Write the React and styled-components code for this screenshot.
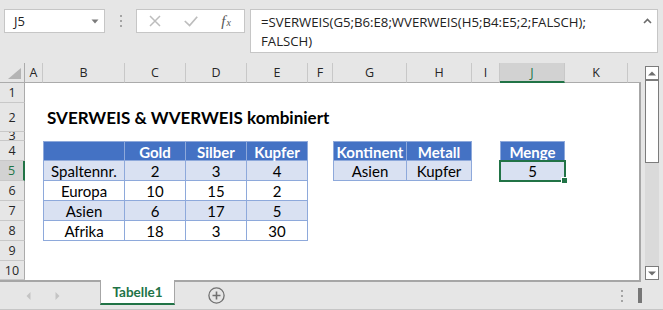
import styled, { createGlobalStyle, css } from "styled-components";

const GlobalStyle = createGlobalStyle`
  html, body {
    margin: 0;
    padding: 0;
    background: #e6e6e6;
  }
  body {
    width: 663px;
    height: 310px;
    overflow: hidden;
  }
`;

const GREEN = "#217346";

const COLS = [
  { k: "", w: 25 },
  { k: "A", w: 18 },
  { k: "B", w: 82 },
  { k: "C", w: 61 },
  { k: "D", w: 61 },
  { k: "E", w: 61 },
  { k: "F", w: 25 },
  { k: "G", w: 74 },
  { k: "H", w: 65 },
  { k: "I", w: 28 },
  { k: "J", w: 65 },
  { k: "K", w: 63 },
  { k: "_", w: 13 },
];

const ROW_H = [20, 29, 9, 20, 20, 20, 20, 20, 20, 19];

// table content keyed by address
const CELLS = {
  B2: { v: "SVERWEIS & WVERWEIS kombiniert", t: "title" },
  B4: { v: "", t: "head" },
  C4: { v: "Gold", t: "head" },
  D4: { v: "Silber", t: "head" },
  E4: { v: "Kupfer", t: "head" },
  B5: { v: "Spaltennr.", t: "band" },
  C5: { v: "2", t: "band" },
  D5: { v: "3", t: "band" },
  E5: { v: "4", t: "band" },
  B6: { v: "Europa", t: "plain" },
  C6: { v: "10", t: "plain" },
  D6: { v: "15", t: "plain" },
  E6: { v: "2", t: "plain" },
  B7: { v: "Asien", t: "band" },
  C7: { v: "6", t: "band" },
  D7: { v: "17", t: "band" },
  E7: { v: "5", t: "band" },
  B8: { v: "Afrika", t: "plain" },
  C8: { v: "18", t: "plain" },
  D8: { v: "3", t: "plain" },
  E8: { v: "30", t: "plain" },
  G4: { v: "Kontinent", t: "head" },
  H4: { v: "Metall", t: "head" },
  G5: { v: "Asien", t: "band" },
  H5: { v: "Kupfer", t: "band" },
  J4: { v: "Menge", t: "head" },
  J5: { v: "5", t: "band" },
};

const TABLE_LEFT = ["B", "G", "J"];
const ACTIVE = { col: "J", row: 5 };

const App = () => {
  return (
    <>
      <GlobalStyle />
      <Window>
        <TopBar>
          <NameBox>
            <span>J5</span>
            <svg width="8" height="5" viewBox="0 0 8 5">
              <path d="M0.5 0.5h7L4 4.5z" fill="#7b7b7b" />
            </svg>
          </NameBox>
          <Grip>
            <i />
            <i />
            <i />
          </Grip>
          <FxButtons>
            <FxBtn>
              <svg width="12" height="12" viewBox="0 0 12 12">
                <path d="M1 1L11 11M11 1L1 11" stroke="#bdbdbd" strokeWidth="1.5" />
              </svg>
            </FxBtn>
            <FxBtn>
              <svg width="14" height="11" viewBox="0 0 14 11">
                <path d="M0.8 5L5.6 9.6L13.2 0.8" stroke="#bdbdbd" strokeWidth="1.7" fill="none" />
              </svg>
            </FxBtn>
            <FxBtn>
              <FxLabel>
                f<small>x</small>
              </FxLabel>
            </FxBtn>
          </FxButtons>
          <FormulaBar>
            <FormulaText>
              =SVERWEIS(G5;B6:E8;WVERWEIS(H5;B4:E5;2;FALSCH);
              <br />
              FALSCH)
            </FormulaText>
            <Collapse>
              <svg width="9" height="6" viewBox="0 0 9 6">
                <path d="M1 5L4.5 1.5L8 5" stroke="#6b6b6b" strokeWidth="1.6" fill="none" />
              </svg>
            </Collapse>
          </FormulaBar>
        </TopBar>

        <Middle>
          <Sheet>
            <Corner>
              <svg width="13" height="11" viewBox="0 0 13 11">
                <path d="M13 0V11H0z" fill="#b4b4b4" />
              </svg>
            </Corner>
            {COLS.slice(1).map((c) => (
              <ColHead key={c.k} $active={c.k === ACTIVE.col} $last={c.k === "_"}>
                {c.k === "_" ? "" : c.k}
              </ColHead>
            ))}
            {ROW_H.map((h, i) => {
              const row = i + 1;
              return [
                <RowHead key={"r" + row} $active={row === ACTIVE.row} $tiny={h < 12}>
                  {row}
                </RowHead>,
                ...COLS.slice(1).map((c) => {
                  const addr = c.k + row;
                  const cell = CELLS[addr];
                  if (c.k === "_") return <EdgeCell key={addr} />;
                  if (!cell) return <Cell key={addr} />;
                  if (cell.t === "title") return <Title key={addr}>{cell.v}</Title>;
                  return (
                    <TableCell
                      key={addr}
                      $kind={cell.t}
                      $l={TABLE_LEFT.includes(c.k)}
                      $t={row === 4}
                      $sel={c.k === ACTIVE.col && row === ACTIVE.row}
                    >
                      {cell.v}
                    </TableCell>
                  );
                }),
              ];
            })}
          </Sheet>
          <VScroll>
            <ScrollBtn>
              <svg width="8" height="5" viewBox="0 0 8 5">
                <path d="M0 4.5h8L4 0.5z" fill="#6e6e6e" />
              </svg>
            </ScrollBtn>
            <Thumb />
            <Track />
            <ScrollBtn>
              <svg width="8" height="5" viewBox="0 0 8 5">
                <path d="M0 0.5h8L4 4.5z" fill="#6e6e6e" />
              </svg>
            </ScrollBtn>
          </VScroll>
        </Middle>

        <TabBar>
          <NavGroup>
            <NavArrow>
              <svg width="5" height="8" viewBox="0 0 5 8">
                <path d="M4.5 0v8L0.5 4z" fill="#c4c4c4" />
              </svg>
            </NavArrow>
            <NavArrow>
              <svg width="5" height="8" viewBox="0 0 5 8">
                <path d="M0.5 0v8L4.5 4z" fill="#c4c4c4" />
              </svg>
            </NavArrow>
          </NavGroup>
          <SheetTab>Tabelle1</SheetTab>
          <AddSheet>
            <svg width="17" height="17" viewBox="0 0 17 17">
              <circle cx="8.5" cy="8.5" r="7.6" stroke="#707070" strokeWidth="1.3" fill="none" />
              <path d="M8.5 4.5v8M4.5 8.5h8" stroke="#707070" strokeWidth="1.6" />
            </svg>
          </AddSheet>
          <RightTools>
            <Grip $small>
              <i />
              <i />
              <i />
            </Grip>
            <SplitBar />
          </RightTools>
        </TabBar>
      </Window>
    </>
  );
};

const Window = styled.div`
  width: 663px;
  height: 310px;
  background: #e6e6e6;
  display: flex;
  flex-direction: column;
  overflow: hidden;
`;

/* ---------- formula bar ---------- */

const TopBar = styled.div`
  height: 63px;
  flex: none;
  display: flex;
  align-items: flex-start;
  padding: 9px 0 0 4px;
  box-sizing: border-box;
`;

const NameBox = styled.div`
  width: 101px;
  height: 24px;
  box-sizing: border-box;
  background: #fff;
  border: 1px solid #c6c6c6;
  display: flex;
  align-items: center;
  justify-content: space-between;
  padding: 0 5px 0 9px;
  font-family: "Open Sans", "Noto Sans", sans-serif;
  font-size: 13px;
  color: #222;
`;

const Grip = styled.div`
  width: ${(p) => (p.$small ? "4px" : "31px")};
  height: ${(p) => (p.$small ? "auto" : "24px")};
  display: flex;
  flex-direction: column;
  align-items: center;
  justify-content: center;
  gap: 3px;

  i {
    display: block;
    width: 2px;
    height: 2px;
    background: #a4a4a4;
  }
`;

const FxButtons = styled.div`
  width: 109px;
  height: 24px;
  box-sizing: border-box;
  background: #fff;
  border: 1px solid #c6c6c6;
  display: flex;
`;

const FxBtn = styled.div`
  flex: 1;
  display: flex;
  align-items: center;
  justify-content: center;
`;

const FxLabel = styled.span`
  font-family: "Liberation Serif", serif;
  font-style: italic;
  font-size: 15px;
  color: #555;
  line-height: 1;

  small {
    font-size: 10px;
    margin-left: 1px;
  }
`;

const FormulaBar = styled.div`
  margin-left: 5px;
  width: 408px;
  height: 44px;
  box-sizing: border-box;
  background: #fff;
  border: 1px solid #c6c6c6;
  display: flex;
  justify-content: space-between;
  padding: 3px 0 0 10px;
`;

const FormulaText = styled.div`
  font-family: "Open Sans", "Noto Sans", sans-serif;
  font-size: 13.2px;
  line-height: 19px;
  color: #222;
  white-space: nowrap;
`;

const Collapse = styled.div`
  width: 20px;
  height: 16px;
  display: flex;
  align-items: center;
  justify-content: center;
`;

/* ---------- sheet ---------- */

const Middle = styled.div`
  display: flex;
  flex: none;
`;

const Sheet = styled.div`
  display: grid;
  grid-template-columns: ${COLS.map((c) => c.w + "px").join(" ")};
  grid-template-rows: 20px ${ROW_H.map((h) => h + "px").join(" ")};
  border-bottom: 2px solid #a6a6a6;
  font-family: Lato, "Liberation Sans", sans-serif;
`;

const headerText = css`
  font-family: "Open Sans", "Noto Sans", sans-serif;
  font-size: 12.5px;
  color: #262626;
  background: #e6e6e6;
  box-sizing: border-box;
  display: flex;
  align-items: center;
  justify-content: center;
  overflow: hidden;
`;

const Corner = styled.div`
  ${headerText};
  border-right: 1px solid #ababab;
  border-bottom: 1px solid #ababab;
  align-items: flex-end;
  justify-content: flex-end;
  padding: 0 3px 3px 0;
`;

const ColHead = styled.div`
  ${headerText};
  border-right: ${(p) => (p.$last ? "none" : "1px solid #c8c8c8")};
  border-bottom: 1px solid #ababab;

  ${(p) =>
    p.$active &&
    css`
      background: #d2d2d2;
      color: ${GREEN};
      border-bottom: 2px solid ${GREEN};
    `}
`;

const RowHead = styled.div`
  ${headerText};
  border-right: 1px solid #ababab;
  border-bottom: 1px solid #c8c8c8;
  line-height: ${(p) => (p.$tiny ? "8px" : "normal")};

  ${(p) =>
    p.$active &&
    css`
      background: #d2d2d2;
      color: ${GREEN};
      border-right: 2px solid ${GREEN};
    `}
`;

const Cell = styled.div`
  background: #fff;
`;

const EdgeCell = styled(Cell)`
  border-right: 2px solid #a6a6a6;
`;

const Title = styled(Cell)`
  display: flex;
  align-items: flex-end;
  padding: 0 0 4px 4px;
  white-space: nowrap;
  overflow: visible;
  font-weight: 700;
  font-size: 17px;
  color: #000;
  position: relative;
  z-index: 1;
`;

const TABLE_BG = {
  head: "#4472c4",
  band: "#d9e1f2",
  plain: "#ffffff",
};

const TableCell = styled.div`
  box-sizing: border-box;
  background: ${(p) => TABLE_BG[p.$kind]};
  color: ${(p) => (p.$kind === "head" ? "#fff" : "#000")};
  font-weight: ${(p) => (p.$kind === "head" ? 700 : 400)};
  font-size: 15px;
  display: flex;
  align-items: center;
  justify-content: center;
  padding-top: 1px;
  white-space: nowrap;
  border-right: 1px solid #8ea9db;
  border-bottom: 1px solid #8ea9db;
  border-left: ${(p) => (p.$l ? "1px solid #8ea9db" : "none")};
  border-top: ${(p) => (p.$t ? "1px solid #8ea9db" : "none")};
  position: relative;

  ${(p) =>
    p.$sel &&
    css`
      &::after {
        content: "";
        position: absolute;
        left: -2px;
        top: -1px;
        right: -2px;
        bottom: -2px;
        border: 2px solid ${GREEN};
        pointer-events: none;
      }
      &::before {
        content: "";
        position: absolute;
        right: -4px;
        bottom: -4px;
        width: 5px;
        height: 5px;
        background: ${GREEN};
        border: 1px solid #fff;
        z-index: 2;
      }
    `}
`;

/* ---------- vertical scrollbar ---------- */

const VScroll = styled.div`
  width: 14px;
  margin: 3px 4px 2px 4px;
  display: flex;
  flex-direction: column;
  background: #dadada;
`;

const ScrollBtn = styled.div`
  height: 14px;
  flex: none;
  box-sizing: border-box;
  background: #fff;
  border: 1px solid #7c7c7c;
  display: flex;
  align-items: center;
  justify-content: center;
`;

const Thumb = styled.div`
  height: 83px;
  flex: none;
  box-sizing: border-box;
  background: #fff;
  border: 1px solid #7c7c7c;
`;

const Track = styled.div`
  flex: 1;
`;

/* ---------- sheet tabs ---------- */

const TabBar = styled.div`
  height: 27px;
  flex: none;
  display: flex;
  align-items: center;
  border-bottom: 1px solid #c6c6c6;
`;

const NavGroup = styled.div`
  width: 86px;
  padding-left: 14px;
  display: flex;
  align-self: stretch;
`;

const NavArrow = styled.div`
  width: 29px;
  display: flex;
  align-items: center;
  justify-content: center;
`;

const SheetTab = styled.div`
  width: 75px;
  align-self: flex-start;
  margin-top: -2px;
  height: 25px;
  box-sizing: border-box;
  background: #fff;
  border-left: 1px solid #a6a6a6;
  border-right: 1px solid #a6a6a6;
  border-bottom: 2px solid ${GREEN};
  display: flex;
  align-items: center;
  justify-content: center;
  font-family: Lato, "Liberation Sans", sans-serif;
  font-weight: 700;
  font-size: 13.5px;
  color: ${GREEN};
  padding-top: 1px;
`;

const AddSheet = styled.div`
  margin-left: 33px;
  display: flex;
  align-items: center;
`;

const RightTools = styled.div`
  margin-left: auto;
  margin-right: 21px;
  display: flex;
  align-items: center;
  gap: 14px;
`;

const SplitBar = styled.div`
  width: 4px;
  height: 15px;
  background: #777;
`;

export default App;
